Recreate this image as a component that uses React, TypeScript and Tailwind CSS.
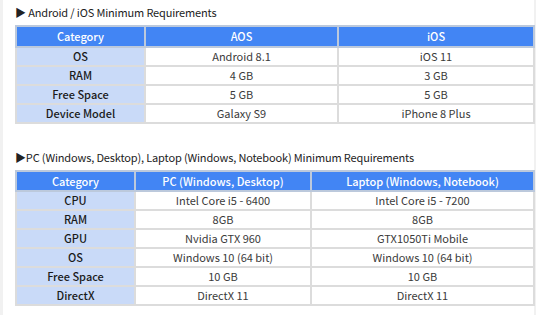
import React from "react";

const font = { fontFamily: '"Noto Sans CJK KR", "Noto Sans", sans-serif' };

type Table = { widths: number[]; head: string[]; rows: string[][]; headH: string };

const t1: Table = {
  widths: [129, 193, 196],
  headH: "h-[21px]",
  head: ["Category", "AOS", "iOS"],
  rows: [
    ["OS", "Android 8.1", "iOS 11"],
    ["RAM", "4 GB", "3 GB"],
    ["Free Space", "5 GB", "5 GB"],
    ["Device Model", "Galaxy S9", "iPhone 8 Plus"],
  ],
};

const t2: Table = {
  widths: [119, 176, 223],
  headH: "h-[20px]",
  head: ["Category", "PC (Windows, Desktop)", "Laptop (Windows, Notebook)"],
  rows: [
    ["CPU", "Intel Core i5 - 6400", "Intel Core i5 - 7200"],
    ["RAM", "8GB", "8GB"],
    ["GPU", "Nvidia GTX 960", "GTX1050Ti Mobile"],
    ["OS", "Windows 10 (64 bit)", "Windows 10 (64 bit)"],
    ["Free Space", "10 GB", "10 GB"],
    ["DirectX", "DirectX 11", "DirectX 11"],
  ],
};

function Spec({ t }: { t: Table }) {
  return (
    <table className="border-collapse table-fixed w-[518px] text-[11px] leading-none">
      <colgroup>
        {t.widths.map((w, i) => (
          <col key={i} style={{ width: w }} />
        ))}
      </colgroup>
      <thead>
        <tr className={t.headH}>
          {t.head.map((h, i) => (
            <th
              key={i}
              className="bg-[#4285f4] text-white font-[500] text-[11px] text-center border-2 border-[#bcc9dc] p-0"
            >
              {h}
            </th>
          ))}
        </tr>
      </thead>
      <tbody>
        {t.rows.map((r, ri) => (
          <tr key={ri} className="h-[19px]">
            {r.map((c, ci) => (
              <td
                key={ci}
                className={
                  "text-center border-2 border-[#dcdcdc] p-0 " +
                  (ci === 0
                    ? "bg-[#c9daf8] font-[500] text-[11px] text-[#1a1a1a]"
                    : "bg-white text-[#3a3a3a]")
                }
              >
                {c}
              </td>
            ))}
          </tr>
        ))}
      </tbody>
    </table>
  );
}

export default function App() {
  return (
    <div className="w-[540px] h-[315px] bg-white overflow-hidden" style={font}>
      <div className="w-[536px] h-[315px] border-l-[3px] border-r-[2px] border-[#f1f1f1] pl-[12px] pt-[1px]">
        <div className="h-[22px] flex items-center text-[11px] tracking-[-0.15px] text-[#222]">
          ▶ Android / iOS Minimum Requirements
        </div>
        <div className="mt-[2px]">
          <Spec t={t1} />
        </div>
        <div className="mt-[23px] h-[20px] flex items-center text-[11px] tracking-[-0.15px] text-[#222]">
          ▶PC (Windows, Desktop), Laptop (Windows, Notebook) Minimum Requirements
        </div>
        <div className="mt-[3px]">
          <Spec t={t2} />
        </div>
      </div>
    </div>
  );
}
